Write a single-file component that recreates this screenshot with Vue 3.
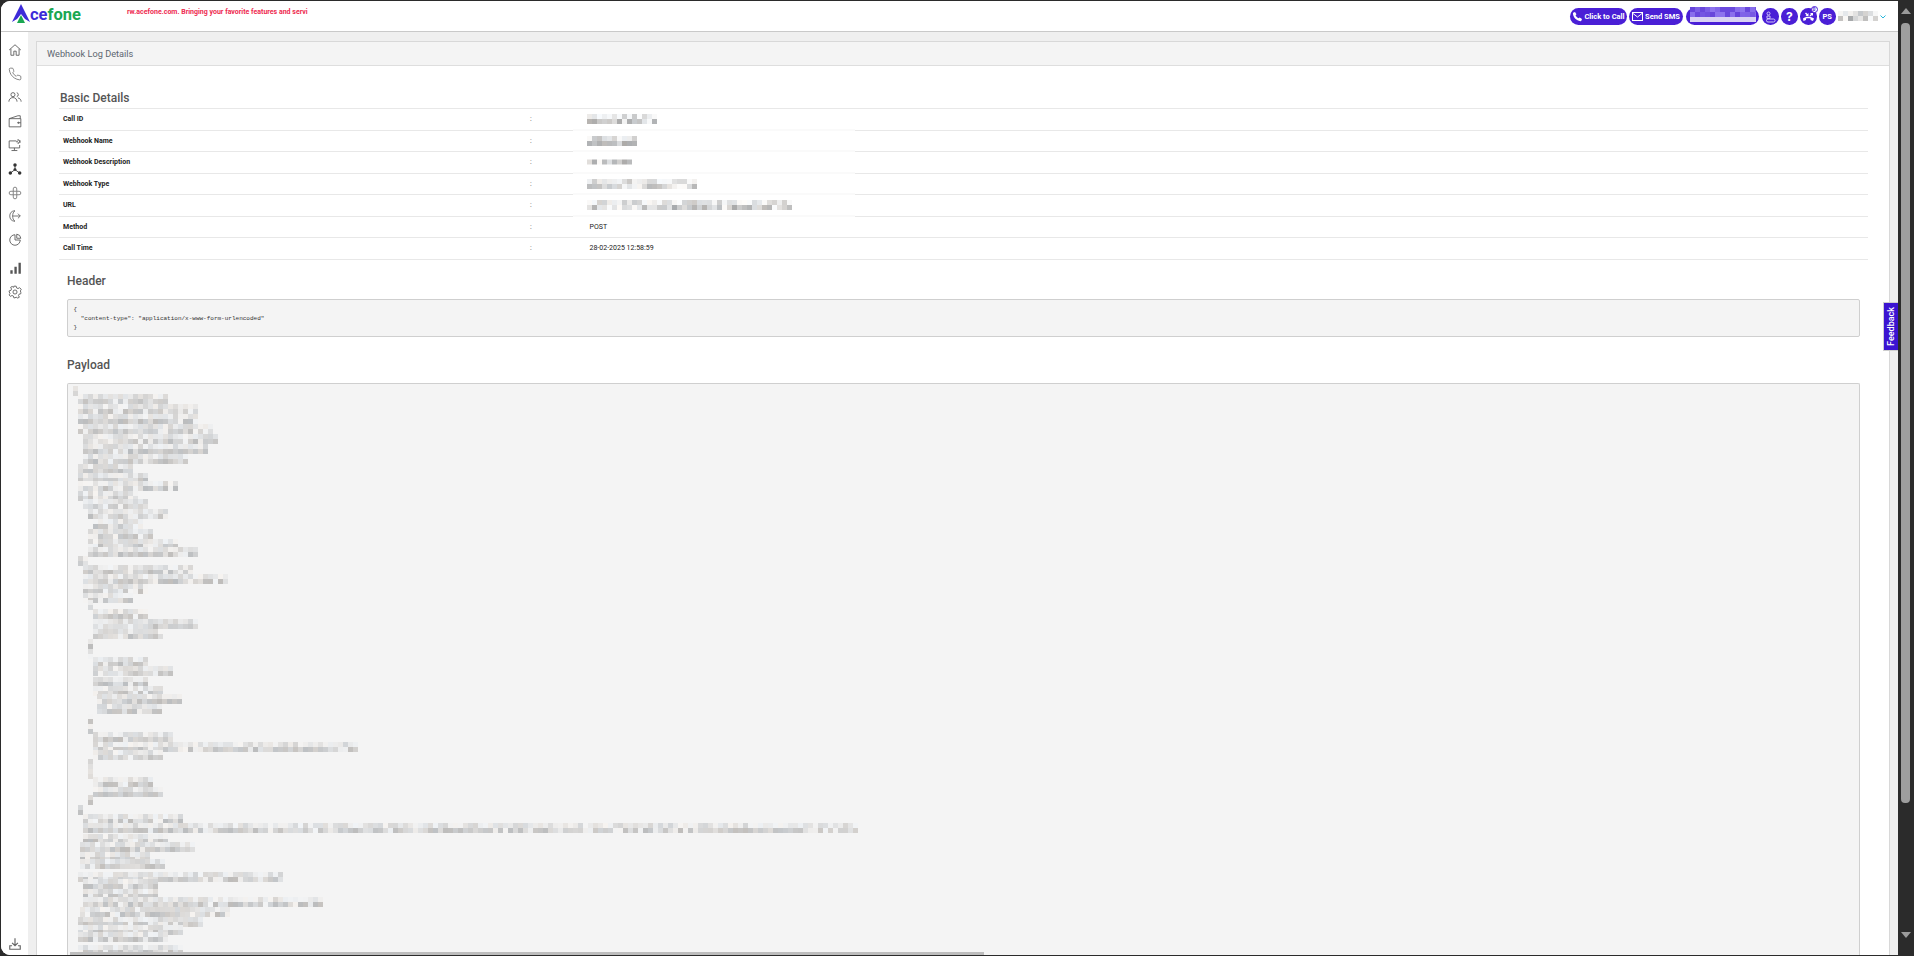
<script setup>
let seed = 12345
function rnd() {
  seed = (seed * 1103515245 + 12345) & 0x7fffffff
  return seed / 0x7fffffff
}
function shade(lo, hi) {
  const v = Math.round(lo + rnd() * (hi - lo))
  const t = Math.round((rnd() - 0.5) * 6)
  return `rgb(${v + t},${v},${v - t})`
}
function mosaic(rows, lo, hi, bg = 244) {
  const out = []
  rows.forEach(([y, x0, x1]) => {
    for (let x = x0; x < x1; x += 5) {
      const gapTop = rnd() < 0.25
      const gapLow = rnd() < 0.15
      out.push({ x, y: y - 5, fill: gapTop ? shade(bg - 6, bg) : shade(lo + 24, hi) })
      out.push({ x, y, fill: gapLow ? shade(bg - 10, bg) : shade(lo, hi - 12) })
    }
  })
  return out
}

const payloadRows = [
  [391, 73, 78], [399, 78, 165], [409, 78, 198], [419, 78, 198], [429, 78, 213], [439, 83, 218],
  [449, 83, 208], [459, 83, 188], [469, 78, 133], [478, 78, 148], [486, 78, 178], [496, 78, 138],
  [504, 83, 148], [514, 88, 168], [524, 93, 143], [534, 88, 153], [544, 88, 178], [552, 88, 198],
  [561, 78, 88], [570, 83, 193], [579, 83, 228], [589, 83, 148], [598, 83, 133], [605, 88, 93],
  [614, 93, 148], [624, 93, 198], [634, 93, 163], [644, 88, 93], [654, 88, 93], [662, 93, 148],
  [671, 93, 172], [682, 93, 148], [691, 93, 160], [699, 97, 178], [709, 97, 160], [719, 88, 93],
  [729, 88, 92], [737, 93, 172], [747, 93, 357], [755, 93, 160], [764, 88, 93], [774, 88, 92],
  [782, 93, 152], [792, 93, 160], [800, 88, 93], [810, 78, 82], [819, 83, 180], [828, 83, 858],
  [839, 83, 165], [847, 80, 193], [857, 80, 148], [864, 80, 165], [877, 78, 282], [884, 83, 155],
  [894, 83, 155], [902, 83, 322], [912, 80, 230], [922, 78, 200], [930, 78, 183], [937, 78, 165],
  [950, 78, 183]
]
const payloadCells = mosaic(payloadRows, 188, 238)

const details = [
  { label: 'Call ID', width: 70 },
  { label: 'Webhook Name', width: 50 },
  { label: 'Webhook Description', width: 45, thin: true },
  { label: 'Webhook Type', width: 110 },
  { label: 'URL', width: 205 },
  { label: 'Method', value: 'POST' },
  { label: 'Call Time', value: '28-02-2025 12:58:59' }
].map(d => {
  if (d.value) return d
  const all = mosaic([[5, 0, d.width]], 170, 245, 252)
  return { ...d, cells: d.thin ? all.filter(c => c.y === 5).map(c => ({ ...c, y: 2.5 })) : all }
})

const pillCells = (() => {
  const o = []
  for (let r = 0; r < 3; r++) for (let x = 0; x < 66; x += 5) {
    const v = rnd()
    o.push({ x, y: r * 5, fill: r === 2 ? '#d9d2f3' : `rgb(${Math.round(95 + v * 50)},${Math.round(60 + v * 60)},${Math.round(215 + v * 25)})` })
  }
  return o
})()
const nameCells = mosaic([[5, 0, 40]], 165, 245, 250)

const sideIcons = [
  { k: 'home' }, { k: 'phone' }, { k: 'users' }, { k: 'wallet' }, { k: 'monitor' }, { k: 'hub' },
  { k: 'flower' }, { k: 'route' }, { k: 'pie' }, { k: 'bars', gap: true }, { k: 'gear' }
]
</script>

<template>
  <div class="screen">
    <div class="window">
      <header class="topbar">
        <div class="logo">
          <svg class="logo-mark" width="20" height="21" viewBox="0 0 20 21">
            <polygon points="9,0 18,18 13,15 9,10 5,15 0,18" fill="#3d2bd8" />
            <polygon points="9,11 13,19 5,19" fill="#1aa752" />
          </svg>
          <span class="logo-text"><span class="ce">ce</span><span class="fone">fone</span></span>
        </div>
        <div class="ticker">rw.acefone.com. Bringing your favorite features and servi</div>
        <div class="actions">
          <button class="pill call">
            <svg width="11" height="11" viewBox="0 0 24 24"><path fill="#fff" d="M6.6 2l3.2 5-2 2.4c1.2 2.8 3.6 5.2 6.6 6.6l2.4-2 5 3.2-1.2 3.6c-.4 1-1.4 1.5-2.4 1.3C9.500 20.600 3.400 14.500 2 5.800c-.2-1 .3-2 1.300-2.400z" /></svg>
            Click to Call
          </button>
          <button class="pill sms">
            <svg width="11" height="9" viewBox="0 0 22 18"><rect x="1" y="1" width="20" height="16" fill="none" stroke="#fff" stroke-width="2" /><path d="M2 3l9 7 9-7" fill="none" stroke="#fff" stroke-width="2" /></svg>
            Send SMS
          </button>
          <div class="pill blur-pill">
            <svg width="66" height="15" viewBox="0 0 66 15"><rect v-for="(c, i) in pillCells" :key="i" :x="c.x" :y="c.y" width="5" height="5" :fill="c.fill" /></svg>
          </div>
          <div class="circle">
            <svg width="11" height="12" viewBox="0 0 22 24" fill="none" stroke="#cfc4f7" stroke-width="2"><circle cx="7" cy="5" r="3" /><path d="M4 10h6v5H4z" /><rect x="3" y="16" width="17" height="6" rx="3" /></svg>
          </div>
          <div class="circle q">?</div>
          <div class="circle badge-wrap">
            <svg width="13" height="11" viewBox="0 0 26 22"><path fill="#fff" d="M2 15c6-5 15-5 22 0l-2 5-5-2v-3c-3-1-6-1-9 0v3l-5 2z" /><path d="M8 3l3 3 2-2v6H7l2-2-3-3zM15 9l3-3-2-2h6v6l-2-2-3 3z" fill="#fff" /></svg>
            <span class="badge">0</span>
          </div>
          <div class="circle initials">PS</div>
          <svg class="name-blur" width="40" height="14" viewBox="0 0 40 14"><rect v-for="(c, i) in nameCells" :key="i" :x="c.x" :y="c.y" width="5" height="5" :fill="c.fill" /></svg>
          <svg class="chev" width="6" height="4" viewBox="0 0 6 4"><path d="M.5.500L3 3 5.500.500" fill="none" stroke="#27b6dc" stroke-width="1" /></svg>
        </div>
      </header>

      <div class="body">
        <nav class="sidebar">
          <div v-for="ic in sideIcons" :key="ic.k" class="side-item" :class="{ spaced: ic.gap }">
            <svg width="14" height="14" viewBox="0 0 24 24" fill="none" stroke="#5a5a5a" stroke-width="1.500">
              <template v-if="ic.k === 'home'"><path d="M2 12L12 3l10 9M5 10v11h5v-7h4v7h5V10" /></template>
              <template v-else-if="ic.k === 'phone'"><path stroke="#777" d="M22 17v3a2 2 0 0 1-2.200 2 19.800 19.800 0 0 1-8.600-3 19.500 19.500 0 0 1-6-6 19.800 19.800 0 0 1-3-8.700A2 2 0 0 1 4.100 2h3a2 2 0 0 1 2 1.700c.1 1 .4 1.900.7 2.800a2 2 0 0 1-.4 2.100L8.100 9.900a16 16 0 0 0 6 6l1.300-1.300a2 2 0 0 1 2.100-.4c.9.3 1.800.6 2.800.7A2 2 0 0 1 22 17z" /></template>
              <template v-else-if="ic.k === 'users'"><circle cx="8.500" cy="8" r="3.500" /><path d="M15 4.600a3.500 3.500 0 0 1 0 6.800M1.500 20c0-4 3-7 7-7s7 3 7 7M17 13.500c3 .5 5.500 3 5.500 6.500" /></template>
              <template v-else-if="ic.k === 'wallet'"><path d="M2 8h20v14H2zM2 8l15-5h4v5M16 15h6" /><circle cx="18" cy="15" r="1" /></template>
              <template v-else-if="ic.k === 'monitor'"><path d="M14 5H2v12h18v-5M11 17v4M6 21.500h10" /><circle cx="18" cy="6" r="2.500" stroke-width="2.500" stroke-dasharray="2 1" /></template>
              <template v-else-if="ic.k === 'hub'"><path stroke="#333" stroke-width="1.500" d="M12 5v8M12 13l-8 6M12 13l8 6" /><circle cx="12" cy="5" r="3" fill="#333" stroke="none" /><circle cx="12" cy="13" r="2.500" fill="#333" stroke="none" /><circle cx="4" cy="19" r="3" fill="#333" stroke="none" /><circle cx="20" cy="19" r="3" fill="#333" stroke="none" /></template>
              <template v-else-if="ic.k === 'flower'"><path stroke="#777" d="M9 9V5a3 3 0 0 1 6 0v4h4a3 3 0 0 1 0 6h-4v4a3 3 0 0 1-6 0v-4H5a3 3 0 0 1 0-6zM9 9h6v6H9z" /></template>
              <template v-else-if="ic.k === 'route'"><path stroke="#666" d="M12 3C6 3 3 7 3 12s3 9 9 9M12 3c-3 2-4 5-4 9s1 7 4 9M8 12h13M17 8l4 4-4 4" /></template>
              <template v-else-if="ic.k === 'pie'"><path d="M12 3v9h9a9 9 0 1 1-9-9zM15 2a8 8 0 0 1 7 7h-7z" /></template>
              <template v-else-if="ic.k === 'bars'"><path fill="#555" stroke="none" d="M4 16h4v6H4zM11 10h4v12h-4zM18 3h4v19h-4z" /></template>
              <template v-else><circle cx="12" cy="12" r="3.500" /><path d="M10 2h4l.7 3 2.500 1.100 2.700-1.500 2.800 2.800-1.500 2.700L22 12.700V15l-3 .7-1 2.500 1.500 2.700-2.800 1.500-2.700-1.500L12 22h-2l-.7-3-2.500-1-2.700 1.500L2 17l1.500-2.700L2 12V10l3-.7 1-2.500L4.500 4 7 2.500l2.700 1.500z" /></template>
            </svg>
          </div>
          <div class="side-item download">
            <svg width="14" height="14" viewBox="0 0 24 24" fill="none" stroke="#666" stroke-width="2"><path d="M12 2v12M7 10l5 5 5-5M7 15H3v6h18v-6h-4" /></svg>
          </div>
        </nav>

        <main class="content">
          <section class="panel">
            <div class="panel-head">Webhook Log Details</div>
            <div class="panel-body">
              <h2 class="title-basic">Basic Details</h2>
              <div class="table">
                <div v-for="d in details" :key="d.label" class="row" :class="{ masked: !d.value }">
                  <span class="label">{{ d.label }}</span>
                  <span class="colon">:</span>
                  <span class="value" :class="{ 'value-blur': !d.value }">
                    <template v-if="d.value">{{ d.value }}</template>
                    <svg v-else :width="d.width" height="10" :viewBox="`0 0 ${d.width} 10`"><rect v-for="(c, i) in d.cells" :key="i" :x="c.x" :y="c.y" width="5" height="5" :fill="c.fill" /></svg>
                  </span>
                </div>
              </div>
              <div class="block">
                <h3 class="subtitle">Header</h3>
                <pre class="code head-code">{
  "content-type": "application/x-www-form-urlencoded"
}</pre>
                <h3 class="subtitle payload-title">Payload</h3>
                <div class="code payload">
                  <svg width="1790" height="600" viewBox="68 384 1790 600"><rect v-for="(c, i) in payloadCells" :key="i" :x="c.x" :y="c.y" width="5" height="5" :fill="c.fill" /></svg>
                </div>
              </div>
            </div>
          </section>
          <div class="feedback"><span>Feedback</span></div>
          <div class="hbar"></div>
        </main>
      </div>
    </div>

    <aside class="vscroll">
      <svg class="arrow" width="10" height="6" viewBox="0 0 10 6"><path d="M5 0l5 6H0z" fill="#9b9b9b" /></svg>
      <div class="thumb"></div>
      <svg class="arrow down" width="10" height="6" viewBox="0 0 10 6"><path d="M5 6L0 0h10z" fill="#9b9b9b" /></svg>
    </aside>
  </div>
</template>

<style>
html, body { margin: 0; overflow: hidden; background: #2b2b2b; }
</style>

<style scoped>
* { box-sizing: border-box; }
.screen {
  width: 1914px;
  height: 956px;
  display: flex;
  background: #2b2b2b;
  overflow: hidden;
  font-family: Roboto, "Liberation Sans", sans-serif;
}
.window {
  width: 1897px;
  height: 954px;
  margin: 1px 0 1px 1px;
  border-radius: 9px 0 0 9px;
  overflow: hidden;
  background: #fff;
  display: flex;
  flex-direction: column;
}
.topbar {
  height: 31px;
  flex: none;
  display: flex;
  align-items: flex-start;
  background: #fff;
  border-bottom: 1px solid #c9c9c9;
}
.logo { display: flex; align-items: flex-start; width: 126px; padding: 3px 0 0 11px; flex: none; }
.logo-mark { flex: none; }
.logo-text { font: 700 16.5px/20px Roboto, sans-serif; margin: 1px 0 0 -2px; }
.ce { color: #3d2bd8; }
.fone { color: #1aa752; }
.ticker { margin-top: 6px; font: 700 7px/11px Roboto, sans-serif; color: #ee2a50; white-space: nowrap; }
.actions { margin-left: auto; display: flex; align-items: center; height: 17px; margin-top: 7px; padding-right: 12px; }
.pill {
  height: 17px;
  border: 0;
  padding: 0;
  border-radius: 9px;
  background: #4a1fd6;
  color: #fff;
  font: 700 7.5px/17px Roboto, sans-serif;
  display: flex;
  align-items: center;
  justify-content: center;
  gap: 1px;
  white-space: nowrap;
}
.call { width: 57px; margin-right: 2px; }
.sms { width: 54px; margin-right: 3px; gap: 2px; }
.blur-pill { width: 73px; margin-right: 3px; position: relative; overflow: visible; align-items: flex-start; }
.blur-pill svg { margin-top: -1px; }
.circle {
  width: 16.5px;
  height: 16.5px;
  border-radius: 50%;
  background: #4a1fd6;
  color: #fff;
  display: flex;
  align-items: center;
  justify-content: center;
  margin-right: 2.5px;
  flex: none;
}
.q { font: 700 12px/16px Inter, Roboto, sans-serif; }
.badge-wrap { position: relative; }
.badge {
  position: absolute;
  top: -2px;
  right: -1px;
  width: 7px;
  height: 7px;
  border-radius: 50%;
  background: #fff;
  border: 1px solid #4a1fd6;
  color: #4a1fd6;
  font: 700 5px/5px Roboto, sans-serif;
  text-align: center;
}
.initials { font: 700 7.5px/16px Roboto, sans-serif; }
.name-blur { flex: none; margin-top: 3px; }
.chev { margin-left: 2px; flex: none; }
.body { flex: 1; min-height: 0; display: flex; }
.sidebar {
  width: 27px;
  flex: none;
  background: #fff;
  padding-top: 6px;
  padding-bottom: 0;
  display: flex;
  flex-direction: column;
  align-items: center;
}
.side-item { height: 23.8px; flex: none; display: flex; align-items: center; justify-content: center; }
.side-item.spaced { margin-top: 4px; }
.download { margin-top: auto; margin-bottom: 0; height: 22px; }
.content {
  flex: 1;
  min-width: 0;
  position: relative;
  background: #efefef;
  padding: 9px 8px 0 8px;
  overflow: hidden;
}
.panel {
  height: 940px;
  background: #fff;
  border: 1px solid #d8d8d8;
  border-bottom: 0;
}
.panel-head {
  height: 24px;
  background: #f4f4f4;
  border-bottom: 1px solid #dedede;
  padding-left: 10px;
  font: 400 9.2px/23px Roboto, sans-serif;
  color: #5d6670;
}
.panel-body { padding: 22px 21px 0 22px; }
.title-basic, .subtitle {
  margin: 0;
  font: 500 12px/20px Roboto, sans-serif;
  color: #555;
}
.title-basic { padding-left: 1px; }
.table { border-top: 1px solid #e8e8e8; }
.row {
  height: 21.5px;
  position: relative;
  display: grid;
  grid-template-columns: 467px 59.5px 1fr;
  align-items: center;
  border-bottom: 1px solid #e8e8e8;
  padding-left: 4px;
  font-size: 7px;
  color: #222;
}
.row.masked::after {
  content: "";
  position: absolute;
  left: 514px;
  width: 282px;
  bottom: -1px;
  height: 2px;
  background: #fafafa;
  z-index: 1;
}
.label { font-weight: 700; white-space: nowrap; }
.colon { color: #555; }
.value { white-space: nowrap; display: flex; align-items: center; }
.value-blur { margin-left: -3px; position: relative; z-index: 2; }
.block { padding-left: 8px; padding-right: 8px; margin-top: 11px; }
.subtitle { margin-bottom: 8px; }
.payload-title { margin-top: 18px; }
.code {
  margin: 0;
  background: #f4f4f4;
  border: 1px solid #cfcfcf;
  border-radius: 2px;
  font: 400 6px/9px "Liberation Mono", monospace;
  color: #333;
}
.head-code { height: 38px; padding: 5px 0 0 5.5px; }
.payload { height: 640px; border-bottom: 0; border-radius: 2px 2px 0 0; overflow: hidden; }
.payload svg { display: block; }
.feedback {
  position: absolute;
  right: 0;
  top: 270px;
  width: 15px;
  height: 49px;
  background: #3b14d1;
  border: 1px solid #cfcfcf;
  border-right: 0;
  display: flex;
  align-items: center;
  justify-content: center;
}
.feedback span {
  writing-mode: vertical-rl;
  transform: rotate(180deg);
  color: #fff;
  font: 500 9px/13px Roboto, sans-serif;
}
.hbar {
  position: absolute;
  left: 42px;
  bottom: 0;
  width: 914px;
  height: 3px;
  background: #bdbdbd;
}
.vscroll {
  width: 16px;
  flex: none;
  position: relative;
  display: flex;
  flex-direction: column;
  align-items: center;
  padding: 8px 4px 0 3px;
}
.thumb { width: 9px; height: 780px; margin-top: 9px; border-radius: 4px; background: #9e9e9e; }
.arrow { flex: none; }
.arrow.down { margin-top: 129px; }
</style>
